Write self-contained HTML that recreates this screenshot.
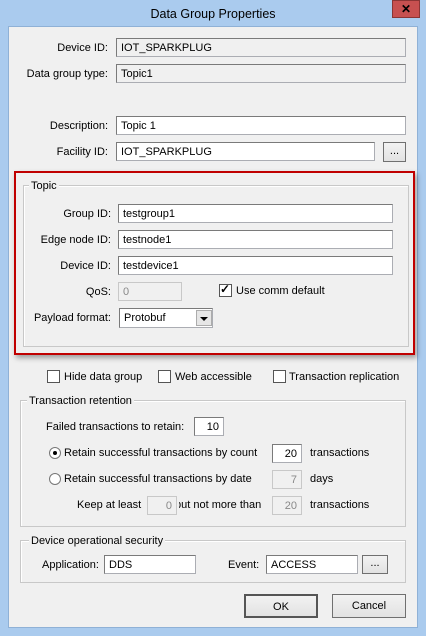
<!DOCTYPE html>
<html><head><meta charset="utf-8"><style>
*{margin:0;padding:0;box-sizing:border-box}
body{width:426px;height:636px;background:#aacbee;position:relative;overflow:hidden;font-family:"Liberation Sans",Tahoma,sans-serif;font-size:11px;color:#000}
.a{position:absolute;white-space:nowrap;line-height:14px}
.r{text-align:right}
.in{position:absolute;background:#fff;border:1px solid #abadb3;border-top-color:#7a7a7a;border-left-color:#7a7a7a;padding:3px 4px 0;line-height:13px;white-space:nowrap}
.ro{background:#f0f0f0}
.dis{background:#f0f0f0;color:#888;text-align:right;border-color:#c8c8c8}
.num{text-align:right}
.grp{position:absolute;border:1px solid #c8c8c8;box-shadow:inset 1px 1px 0 #fff}
.gl{position:absolute;background:#f0f0f0;padding:0 2px;line-height:14px;white-space:nowrap}
.btn{position:absolute;border:1px solid #707070;background:linear-gradient(#f2f2f2,#e2e2e2);text-align:center;line-height:22px}
.cb{position:absolute;width:13px;height:13px;border:1px solid #555;background:#fff}
.rad{position:absolute;width:12px;height:12px;border-radius:50%;border:1px solid #777;background:#fff}
</style></head><body>
<div class="a" style="left:0;top:7px;width:426px;text-align:center;font-size:12.5px">Data Group Properties</div>
<div style="position:absolute;left:392px;top:0;width:28px;height:18px;background:#c75050;border:1px solid #8a3535;color:#000;font-weight:bold;text-align:center;line-height:16px;font-size:12px">✕</div>
<div style="position:absolute;left:8px;top:26px;width:410px;height:602px;background:#f0f0f0;border:1px solid #8fb1d6"></div>

<div class="a r" style="left:0;width:108px;top:41px">Device ID:</div>
<div class="in ro" style="left:116px;top:38px;width:290px;height:19px">IOT_SPARKPLUG</div>
<div class="a r" style="left:0;width:108px;top:67px">Data group type:</div>
<div class="in ro" style="left:116px;top:64px;width:290px;height:19px">Topic1</div>
<div class="a r" style="left:0;width:108px;top:119px">Description:</div>
<div class="in" style="left:116px;top:116px;width:290px;height:19px">Topic 1</div>
<div class="a r" style="left:0;width:108px;top:145px">Facility ID:</div>
<div class="in" style="left:116px;top:142px;width:259px;height:19px">IOT_SPARKPLUG</div>
<div class="btn" style="left:383px;top:142px;width:23px;height:20px;line-height:16px">...</div>

<div style="position:absolute;left:14px;top:171px;width:401px;height:184px;border:2px solid #c00000;box-shadow:2px 3px 5px rgba(0,0,0,.35)"></div>
<div class="grp" style="left:23px;top:185px;width:386px;height:162px"></div>
<div class="gl" style="left:29px;top:179px">Topic</div>
<div class="a r" style="left:0;width:111px;top:207px">Group ID:</div>
<div class="in" style="left:118px;top:204px;width:275px;height:19px">testgroup1</div>
<div class="a r" style="left:0;width:111px;top:233px">Edge node ID:</div>
<div class="in" style="left:118px;top:230px;width:275px;height:19px">testnode1</div>
<div class="a r" style="left:0;width:111px;top:259px">Device ID:</div>
<div class="in" style="left:118px;top:256px;width:275px;height:19px">testdevice1</div>
<div class="a r" style="left:0;width:111px;top:285px">QoS:</div>
<div class="in dis" style="left:118px;top:282px;width:64px;height:19px;text-align:left">0</div>
<div class="cb" style="left:219px;top:284px"></div>
<div class="a" style="left:220px;top:282px;font-size:12px;font-weight:bold">✓</div>
<div class="a" style="left:236px;top:284px">Use comm default</div>
<div class="a r" style="left:0;width:111px;top:311px">Payload format:</div>
<div class="in" style="left:119px;top:308px;width:94px;height:20px">Protobuf</div>
<div style="position:absolute;left:196px;top:310px;width:16px;height:16px;background:#e6e6e6;border:1px solid #acacac"></div>
<div style="position:absolute;left:200px;top:317px;border-left:4px solid transparent;border-right:4px solid transparent;border-top:4px solid #000"></div>

<div class="cb" style="left:47px;top:370px"></div><div class="a" style="left:64px;top:370px">Hide data group</div>
<div class="cb" style="left:158px;top:370px"></div><div class="a" style="left:175px;top:370px">Web accessible</div>
<div class="cb" style="left:273px;top:370px"></div><div class="a" style="left:289px;top:370px">Transaction replication</div>

<div class="grp" style="left:20px;top:400px;width:386px;height:127px"></div>
<div class="gl" style="left:27px;top:394px">Transaction retention</div>
<div class="a" style="left:46px;top:420px">Failed transactions to retain:</div>
<div class="in num" style="left:194px;top:417px;width:30px;height:19px">10</div>
<div class="rad" style="left:49px;top:447px"></div><div style="position:absolute;left:53px;top:451px;width:4px;height:4px;border-radius:50%;background:#000"></div>
<div class="a" style="left:64px;top:446px">Retain successful transactions by count</div>
<div class="in num" style="left:272px;top:444px;width:30px;height:19px">20</div>
<div class="a" style="left:310px;top:446px">transactions</div>
<div class="rad" style="left:49px;top:473px"></div>
<div class="a" style="left:64px;top:472px">Retain successful transactions by date</div>
<div class="in dis" style="left:272px;top:470px;width:30px;height:19px">7</div>
<div class="a" style="left:310px;top:472px">days</div>
<div class="a" style="left:77px;top:498px">Keep at least</div>
<div class="in dis" style="left:147px;top:496px;width:30px;height:19px">0</div>
<div class="a" style="left:179px;top:498px;width:89px;overflow:hidden"><span style="margin-left:-4px">but not more than</span></div>
<div class="in dis" style="left:272px;top:496px;width:30px;height:19px">20</div>
<div class="a" style="left:310px;top:498px">transactions</div>

<div class="grp" style="left:20px;top:540px;width:386px;height:43px"></div>
<div class="gl" style="left:29px;top:534px">Device operational security</div>
<div class="a" style="left:42px;top:558px">Application:</div>
<div class="in" style="left:104px;top:555px;width:92px;height:19px">DDS</div>
<div class="a" style="left:228px;top:558px">Event:</div>
<div class="in" style="left:266px;top:555px;width:92px;height:19px">ACCESS</div>
<div class="btn" style="left:362px;top:555px;width:26px;height:19px;line-height:15px">...</div>

<div class="btn" style="left:244px;top:594px;width:74px;height:24px;border:2px solid #555">OK</div>
<div class="btn" style="left:332px;top:594px;width:74px;height:24px">Cancel</div>
</body></html>
